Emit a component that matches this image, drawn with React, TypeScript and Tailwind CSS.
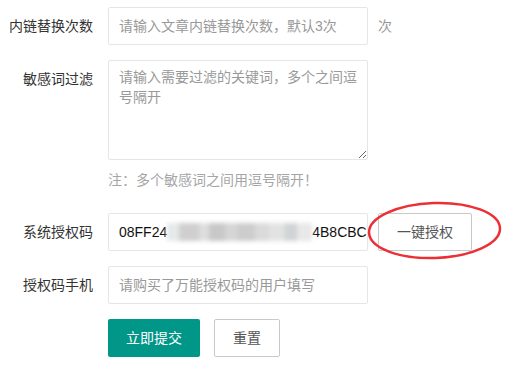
import React from 'react';

const font = { fontFamily: '"Liberation Sans", "Noto Sans CJK SC", sans-serif' };

function Label({ children }: { children: React.ReactNode }) {
  return (
    <label className="w-[108px] shrink-0 pr-[15px] py-[9px] text-right leading-[20px] text-[#333]">{children}</label>
  );
}

const inputCls =
  'w-[260px] h-[38px] border border-[#e6e6e6] rounded-[2px] px-[10px] leading-[20px] text-[#333] outline-none placeholder:text-[#999] bg-white';

function Blurred() {
  return (
    <span className="inline-flex w-[145px] h-[18px] align-middle blur-[2px] relative top-[-1px]">
      <span className="w-[12px] bg-[#e6e9e9]" />
      <span className="w-[20px] bg-[#cfcfcf]" />
      <span className="w-[10px] bg-[#dedede]" />
      <span className="w-[16px] bg-[#c8c8c8]" />
      <span className="w-[12px] bg-[#d6d6d6]" />
      <span className="w-[18px] bg-[#cdcdcd]" />
      <span className="w-[14px] bg-[#dadada]" />
      <span className="w-[16px] bg-[#e2e2e2]" />
      <span className="w-[12px] bg-[#d0d4d4]" />
      <span className="w-[15px] bg-[#e8e8e8]" />
    </span>
  );
}

export default function App() {
  return (
    <div className="relative w-[514px] h-[370px] bg-white pt-[7px] text-[14px]" style={font}>
      <div className="flex items-start">
        <Label>内链替换次数</Label>
        <input className={inputCls} placeholder="请输入文章内链替换次数，默认3次" />
        <span className="ml-[10px] py-[9px] leading-[20px] text-[#999]">次</span>
      </div>

      <div className="flex items-start mt-[15px]">
        <Label>敏感词过滤</Label>
        <textarea
          className="w-[260px] h-[100px] border border-[#e6e6e6] rounded-[2px] px-[10px] py-[6px] leading-[20px] text-[#333] outline-none placeholder:text-[#999]"
          placeholder="请输入需要过滤的关键词，多个之间逗号隔开"
        />
      </div>

      <div className="mt-[10px] pl-[108px] leading-[20px] text-[#a6a6a6]">注：多个敏感词之间用逗号隔开！</div>

      <div className="flex items-start mt-[23px]">
        <Label>系统授权码</Label>
        <div className="w-[260px] h-[38px] border border-[#e6e6e6] rounded-[2px] pl-[10px] leading-[36px] text-[#111] whitespace-nowrap overflow-hidden">
          08FF24<Blurred />4B8CBC
        </div>
        <button className="ml-[10px] h-[38px] px-[18px] border border-[#c9c9c9] rounded-[2px] bg-white text-[#555] leading-[36px]">
          一键授权
        </button>
      </div>

      <div className="flex items-start mt-[15px]">
        <Label>授权码手机</Label>
        <input className={inputCls} placeholder="请购买了万能授权码的用户填写" />
      </div>

      <div className="flex mt-[15px] pl-[108px] gap-[14px]">
        <button className="h-[38px] px-[18px] rounded-[2px] bg-[#009688] text-white leading-[38px]">立即提交</button>
        <button className="h-[38px] px-[18px] border border-[#c9c9c9] rounded-[2px] bg-white text-[#555] leading-[36px]">
          重置
        </button>
      </div>

      <svg className="absolute left-0 top-0 pointer-events-none" width="514" height="370">
        <ellipse cx="434.5" cy="230.5" rx="65.5" ry="27.5" fill="none" stroke="#ec2f35" strokeWidth="2.5" transform="rotate(-2 434.5 230.5)" />
      </svg>
    </div>
  );
}
